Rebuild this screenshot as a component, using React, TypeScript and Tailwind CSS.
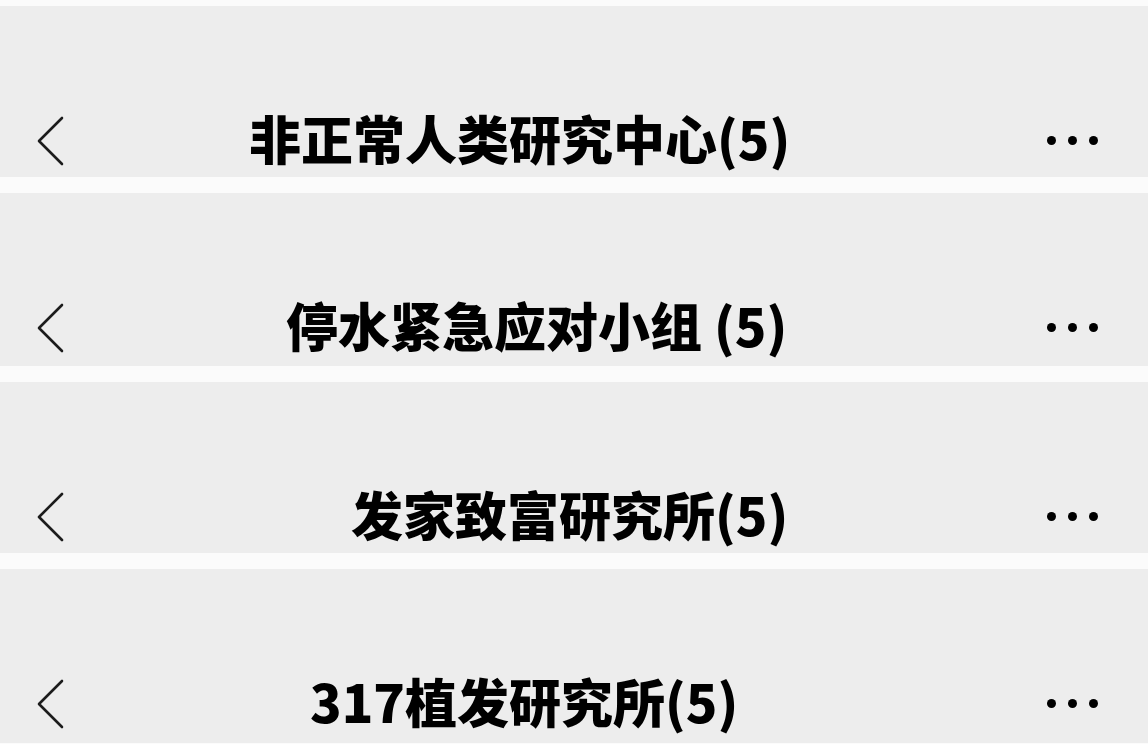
const groups = [
  { name: '非正常人类研究中心(5)', height: 'h-[171px]', offset: 'ml-[183px]' },
  { name: '停水紧急应对小组 (5)', height: 'h-[173px]', offset: 'ml-[220px]' },
  { name: '发家致富研究所(5)', height: 'h-[171px]', offset: 'ml-[285px]' },
  { name: '317植发研究所(5)', height: 'h-[174px]', offset: 'ml-[244px]' },
]

function Chevron() {
  return (
    <svg width="30" height="52" viewBox="0 0 30 52" className="shrink-0">
      <path d="M26 4 L3 27 L26 50" fill="none" stroke="#1c1c1c" strokeWidth="2.6" strokeLinecap="round" strokeLinejoin="round" />
    </svg>
  )
}

function Dots() {
  return (
    <div className="ml-auto mr-[50px] flex items-center gap-[12px]">
      <span className="h-[9px] w-[9px] rounded-full bg-black" />
      <span className="h-[9px] w-[9px] rounded-full bg-black" />
      <span className="h-[9px] w-[9px] rounded-full bg-black" />
    </div>
  )
}

export default function App() {
  return (
    <div
      className="flex h-[744px] w-[1148px] flex-col gap-[16px] overflow-hidden bg-[#fbfbfb] pt-[6px]"
      style={{ fontFamily: '"Noto Sans CJK SC", "Noto Sans", sans-serif' }}
    >
      {groups.map((g) => (
        <div key={g.name} className={`${g.height} shrink-0 bg-[#ededed] pt-[108px]`}>
          <div className="flex h-[52px] items-center pl-[36px]">
            <Chevron />
            <span className={`${g.offset} pb-[5px] text-[52px] font-black leading-none text-black whitespace-nowrap`}>
              {g.name}
            </span>
            <Dots />
          </div>
        </div>
      ))}
    </div>
  )
}
